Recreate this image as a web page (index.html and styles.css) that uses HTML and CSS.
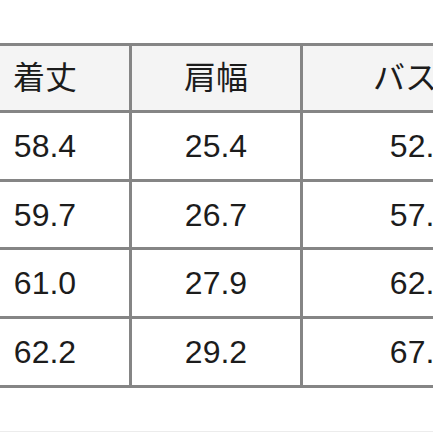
FILE: index.html
```html
<!DOCTYPE html>
<html lang="ja">
<head>
<meta charset="utf-8">
<link rel="stylesheet" href="styles.css">
</head>
<body>
<div class="page">
  <div class="size-table">
    <div class="cell head">着丈</div>
    <div class="cell head">肩幅</div>
    <div class="cell head">バスト</div>
    <div class="cell">58.4</div>
    <div class="cell">25.4</div>
    <div class="cell">52.1</div>
    <div class="cell">59.7</div>
    <div class="cell">26.7</div>
    <div class="cell">57.2</div>
    <div class="cell">61.0</div>
    <div class="cell">27.9</div>
    <div class="cell">62.2</div>
    <div class="cell">62.2</div>
    <div class="cell">29.2</div>
    <div class="cell">67.3</div>
  </div>
  <div class="rule"></div>
</div>
</body>
</html>
```
FILE: styles.css
```css
html, body {
  margin: 0;
  padding: 0;
  background: #ffffff;
  overflow: hidden;
}
.page {
  width: 433px;
  height: 433px;
  overflow: hidden;
  padding-top: 43px;
  box-sizing: border-box;
}
.size-table {
  display: grid;
  grid-template-columns: 171px 171px 239px;
  grid-auto-rows: 69px;
  grid-template-rows: 67px 69px 68px 69px 69px;
  width: max-content;
  margin-left: -42px;
  border-top: 3px solid #858585;
  border-left: 3px solid #858585;
  font-family: "Liberation Sans", "Noto Sans CJK JP", sans-serif;
  font-size: 32px;
  color: #1c1c1c;
}
.cell {
  box-sizing: border-box;
  border-right: 3px solid #858585;
  border-bottom: 3px solid #858585;
  display: flex;
  align-items: center;
  justify-content: center;
  line-height: 1;
  background: #ffffff;
}
.head {
  background: #f4f4f4;
  font-family: "Noto Sans CJK JP", sans-serif;
  padding-bottom: 6px;
}
.rule {
  margin-top: 43px;
  height: 1px;
  background: #ececec;
}
```
